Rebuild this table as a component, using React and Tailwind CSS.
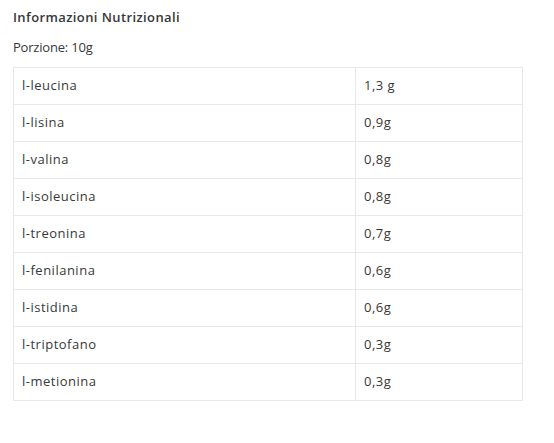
const rows = [
  ["l-leucina", "1,3 g"],
  ["l-lisina", "0,9g"],
  ["l-valina", "0,8g"],
  ["l-isoleucina", "0,8g"],
  ["l-treonina", "0,7g"],
  ["l-fenilanina", "0,6g"],
  ["l-istidina", "0,6g"],
  ["l-triptofano", "0,3g"],
  ["l-metionina", "0,3g"],
];

export default function App() {
  return (
    <div className="w-[554px] h-[443px] bg-white text-[#383838] px-[13px] pt-[9px]" style={{ fontFamily: '"Open Sans", sans-serif' }}>
      <div className="text-[13px] font-semibold leading-[16px] tracking-[0.4px]">Informazioni Nutrizionali</div>
      <div className="text-[13px] leading-[16px] mt-[14px] tracking-[-0.2px]">Porzione: 10g</div>
      <table className="mt-[12px] w-[510px] border-collapse border border-[#e8e8e8] text-[13px] tracking-[0.5px]">
        <tbody>
          {rows.map(([n, v]) => (
            <tr key={n} className="h-[37px]">
              <td className="w-[342px] border border-[#e8e8e8] pl-[8px] align-middle">{n}</td>
              <td className="border border-[#e8e8e8] pl-[8px] align-middle">{v}</td>
            </tr>
          ))}
        </tbody>
      </table>
    </div>
  );
}
